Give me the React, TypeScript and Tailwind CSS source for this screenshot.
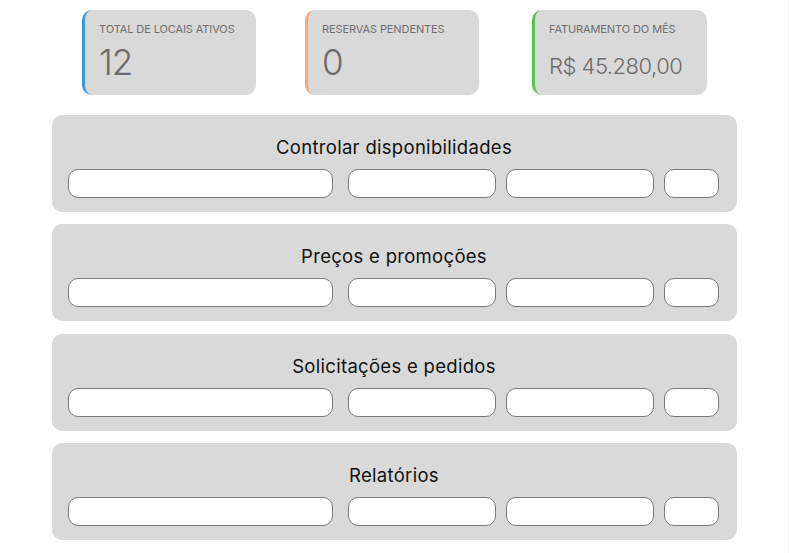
import React from "react";

const stats = [
  { label: "TOTAL DE LOCAIS ATIVOS", value: "12", border: "border-[#3a98dc]", big: true, w: "w-[174px]", ml: "ml-[82px]" },
  { label: "RESERVAS PENDENTES", value: "0", border: "border-[#f4a97c]", big: true, w: "w-[174px]", ml: "ml-[49px]" },
  { label: "FATURAMENTO DO MÊS", value: "R$ 45.280,00", border: "border-[#52c84a]", big: false, w: "w-[175px]", ml: "ml-[53px]" },
];

const sections = ["Controlar disponibilidades", "Preços e promoções", "Solicitações e pedidos", "Relatórios"];

function Field({ w }: { w: string }) {
  return <div className={`${w} h-[29px] rounded-[10px] bg-white border border-[#7a7a7a]`} />;
}

export default function App() {
  return (
    <div
      className="w-[789px] h-[553px] bg-white overflow-hidden border-r border-[#f0f0f0]"
      style={{ fontFamily: "Inter, 'Noto Sans', sans-serif" }}
    >
      <div className="flex pt-[10px]">
        {stats.map((s) => (
          <div
            key={s.label}
            className={`${s.w} ${s.ml} h-[85px] shrink-0 rounded-[10px] bg-[#d9d9d9] border-l-[3px] ${s.border} pl-[14px] pt-[12px]`}
          >
            <div className="text-[11px] leading-[14px] text-[#6e6e6e] tracking-[-0.1px]">{s.label}</div>
            {s.big ? (
              <div className="text-[35px] leading-[40px] mt-[6px] font-light text-[#6b6b6b] tracking-[-1px]">{s.value}</div>
            ) : (
              <div className="text-[22px] leading-[30px] mt-[15px] font-light text-[#6b6b6b] tracking-[-0.5px]">{s.value}</div>
            )}
          </div>
        ))}
      </div>
      <div className="flex flex-col gap-[12.3px] mt-[20px] pl-[52px] w-[737px]">
        {sections.map((t) => (
          <div key={t} className="h-[97px] shrink-0 rounded-[10px] bg-[#d9d9d9] pt-[20px] pl-[16px] pr-[17px]">
            <div className="text-center text-[18.5px] leading-[24px] text-[#111] tracking-[0.3px]">{t}</div>
            <div className="flex mt-[10px]">
              <Field w="w-[265px]" />
              <div className="w-[15px]" />
              <Field w="w-[148px]" />
              <div className="w-[10px]" />
              <Field w="w-[148px]" />
              <div className="w-[10px]" />
              <Field w="w-[55px]" />
            </div>
          </div>
        ))}
      </div>
    </div>
  );
}
